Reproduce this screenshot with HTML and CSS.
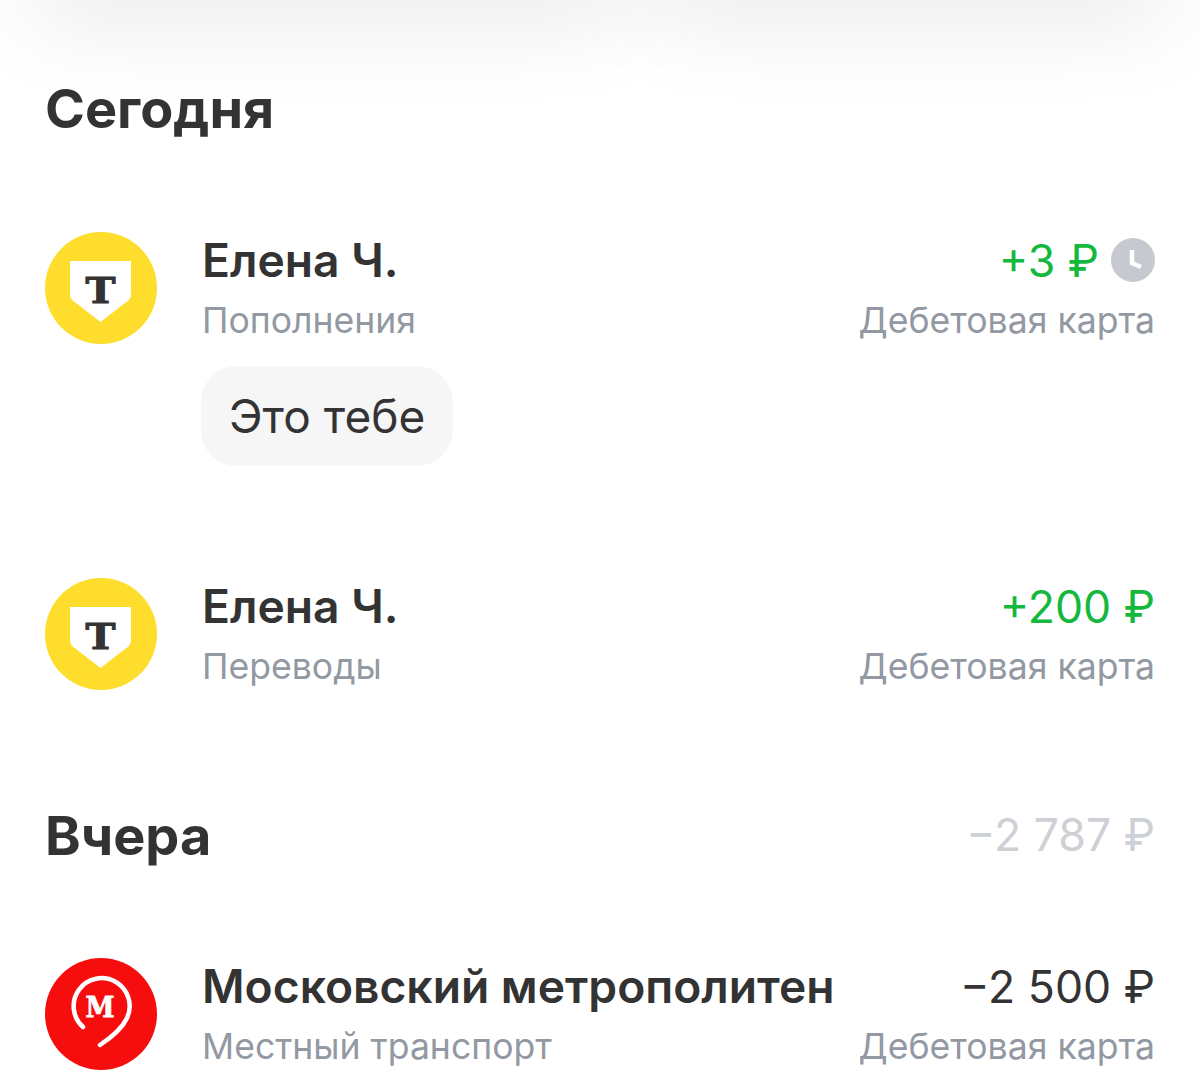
FILE: index.html
```html
<!DOCTYPE html>
<html lang="ru">
<head>
  <meta charset="UTF-8" />
  <meta name="viewport" content="width=device-width, initial-scale=1.0" />
  <title>Операции</title>
  <link rel="stylesheet" href="styles.css">
</head>
<body>
  <div class="top-cards">
    <div class="top-card card-left"></div>
    <div class="top-card card-right"></div>
  </div>

  <main class="feed">
    <div class="day-head day-head-first">
      <h2>Сегодня</h2>
    </div>

    <div class="op">
      <svg class="avatar" viewBox="0 0 112 112">
        <circle cx="56" cy="56" r="56" fill="#fedd2c" />
        <path d="M25 29H86V62Q86 68 80 71L55.500 90L31 71Q25 68 25 62Z" fill="#fff" />
        <text class="logo-t" x="55.500" y="71" text-anchor="middle" textLength="30" lengthAdjust="spacingAndGlyphs">T</text>
      </svg>
      <div class="op-text">
        <div class="op-name">Елена Ч.</div>
        <div class="op-sub">Пополнения</div>
        <div class="bubble">Это тебе</div>
      </div>
      <div class="op-right">
        <div class="op-sum sum-plus">
          <span class="sum-value">+3 ₽</span>
          <svg class="clock" viewBox="0 0 44 44">
            <circle cx="22" cy="22" r="22" fill="#c6c9d0" />
            <path d="M21 12V25L30 29" fill="none" stroke="#fff" stroke-width="4.500" />
          </svg>
        </div>
        <div class="op-sub">Дебетовая карта</div>
      </div>
    </div>

    <div class="op op-next">
      <svg class="avatar" viewBox="0 0 112 112">
        <circle cx="56" cy="56" r="56" fill="#fedd2c" />
        <path d="M25 29H86V62Q86 68 80 71L55.500 90L31 71Q25 68 25 62Z" fill="#fff" />
        <text class="logo-t" x="55.500" y="71" text-anchor="middle" textLength="30" lengthAdjust="spacingAndGlyphs">T</text>
      </svg>
      <div class="op-text">
        <div class="op-name">Елена Ч.</div>
        <div class="op-sub">Переводы</div>
      </div>
      <div class="op-right">
        <div class="op-sum sum-plus"><span class="sum-value">+200 ₽</span></div>
        <div class="op-sub">Дебетовая карта</div>
      </div>
    </div>

    <div class="day-head">
      <h2>Вчера</h2>
      <div class="day-total">−2 787 ₽</div>
    </div>

    <div class="op">
      <svg class="avatar" viewBox="0 0 112 112">
        <circle cx="56" cy="56" r="56" fill="#f60d0d" />
        <path d="M38 69A28 28 0 1 1 82 60Q76 73 55 87" fill="none" stroke="#fff" stroke-width="4.500" stroke-linecap="round" />
        <text class="logo-m" x="55" y="59" text-anchor="middle" textLength="29" lengthAdjust="spacingAndGlyphs">M</text>
      </svg>
      <div class="op-text">
        <div class="op-name">Московский метрополитен</div>
        <div class="op-sub">Местный транспорт</div>
      </div>
      <div class="op-right">
        <div class="op-sum"><span class="sum-value">−2 500 ₽</span></div>
        <div class="op-sub">Дебетовая карта</div>
      </div>
    </div>
  </main>
</body>
</html>
```

FILE: styles.css
```css
html, body {
  height: 100%;
}

body {
  margin: 0;
  overflow: hidden;
  background-color: #fff;
  color: #333;
  font-family: Inter, "Noto Sans", sans-serif;
}

/* cards cut off by the top edge, only the shadow shows */
.top-cards {
  display: flex;
  gap: 30px;
  height: 0;
  padding: 0 30px;
}
.top-card {
  height: 30px;
  margin-top: -30px;
  background-color: #fff;
  border-radius: 20px;
  box-shadow: 0 0 100px rgba(0, 0, 0, 0.22);
}
.card-left {
  width: 595px;
}
.card-right {
  flex: 1;
}

.feed {
  padding: 79px 45px 0;
}

.day-head {
  display: flex;
  align-items: center;
  justify-content: space-between;
  height: 60px;
  margin: 109px 0 92px;
}
.day-head-first {
  margin: 0 0 93px;
}
.day-head h2 {
  margin: 0;
  font-size: 54px;
  font-weight: 700;
  line-height: 60px;
}
.day-total {
  margin-top: -2px;
  font-size: 44.600px;
  color: #cdd0d5;
}

.op {
  display: flex;
  align-items: flex-start;
}
.op-next {
  margin-top: 112px;
}
.avatar {
  flex: none;
  width: 112px;
  height: 112px;
  margin-right: 45px;
}
.logo-t {
  font-family: "DejaVu Serif", serif;
  font-size: 36px;
  font-weight: 700;
  fill: #333;
  stroke: #333;
  stroke-width: 1px;
}
.logo-m {
  font-family: "DejaVu Serif", serif;
  font-size: 28px;
  font-weight: 700;
  fill: #fff;
  stroke: #fff;
  stroke-width: 0.8px;
}

.op-text {
  flex: 1;
}
.op-name {
  font-size: 46.200px;
  font-weight: 600;
  line-height: 56px;
}
.op-sub {
  margin-top: 3px;
  font-size: 35.600px;
  line-height: 60px;
  color: #9299a2;
}
.bubble {
  display: inline-block;
  margin-top: 15px;
  margin-left: -1px;
  padding: 0 28px;
  font-size: 46px;
  line-height: 100px;
  color: #333;
  background-color: #f6f6f7;
  border-radius: 36px;
}

.op-right {
  text-align: right;
}
.op-sum {
  display: flex;
  align-items: center;
  justify-content: flex-end;
  gap: 12px;
  height: 56px;
  font-size: 44.600px;
}
.sum-value {
  margin-top: 2px;
}
.sum-plus {
  color: #13b83c;
}
.clock {
  width: 44px;
  height: 44px;
}
```
